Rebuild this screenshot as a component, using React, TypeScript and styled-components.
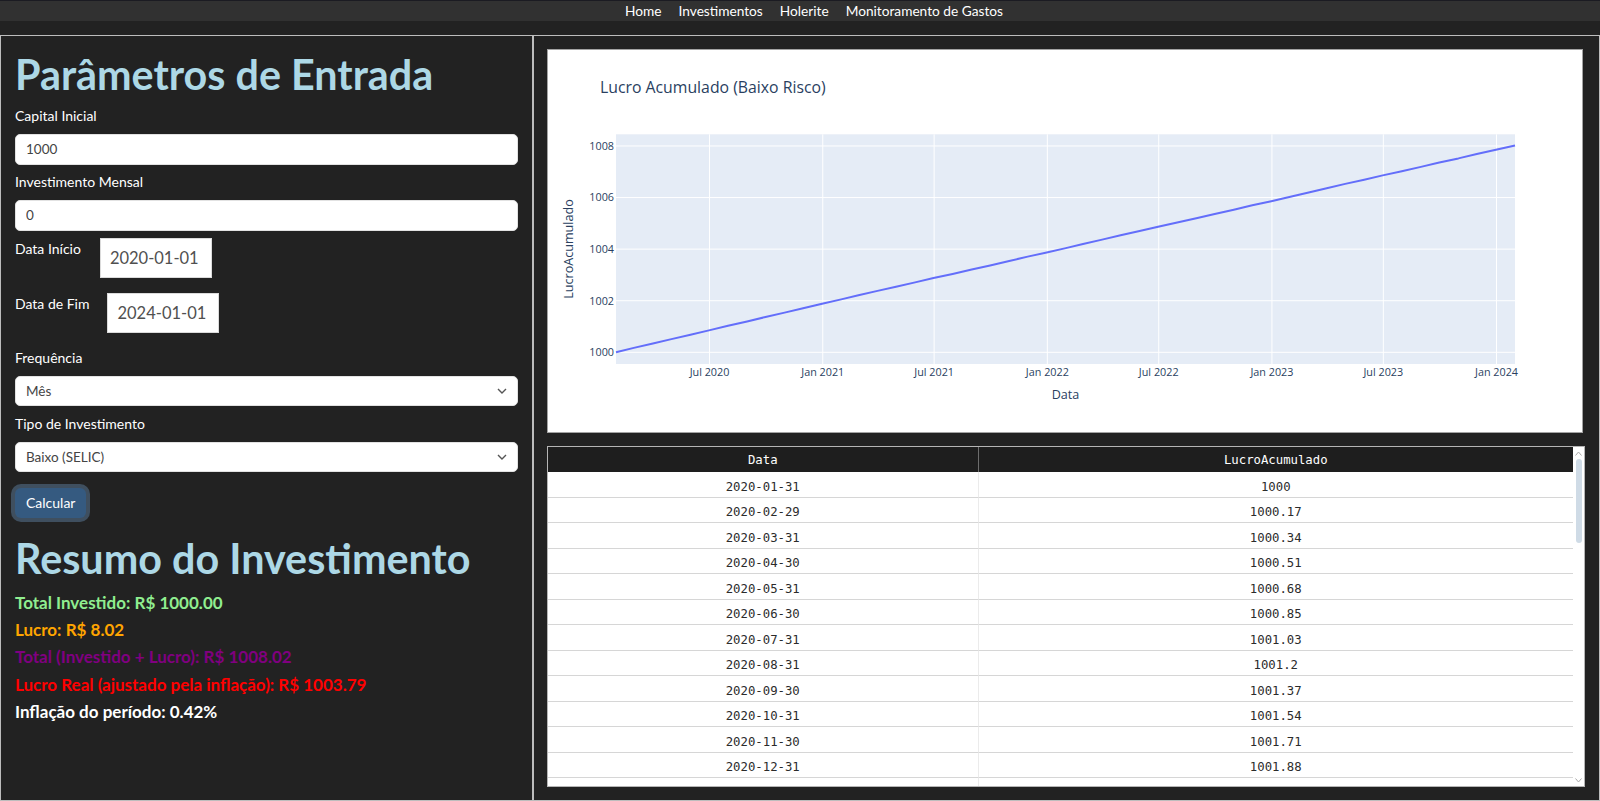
import React from 'react';
import styled, { createGlobalStyle } from 'styled-components';

// Estilos globais
const GlobalStyle = createGlobalStyle`
  html, body {
    margin: 0;
    padding: 0;
    background: #222222;
  }
  body {
    font-family: Lato, "Noto Sans", sans-serif;
    color: #ffffff;
    overflow: hidden;
  }
  * {
    box-sizing: border-box;
  }
`;

// Navegação
const NavBar = styled.nav`
  height: 21px;
  background: #313131;
  border-top: 1px solid #1b1b22;
  display: flex;
  justify-content: center;
  align-items: center;
  padding-left: 28px;
`;

const NavLink = styled.a`
  color: #ffffff;
  font-size: 13.7px;
  line-height: 20px;
  text-decoration: none;
  padding: 0 8.5px;
`;

// Layout principal
const Main = styled.div`
  display: flex;
  margin-top: 14px;
  height: 766px;
`;

const LeftPanel = styled.section`
  width: 533px;
  flex: none;
  border: 1px solid #bdbdbd;
  padding: 12.5px 14px;
  display: flex;
  flex-direction: column;
  align-items: flex-start;
`;

const RightPanel = styled.section`
  flex: 1;
  min-width: 0;
  border: 1px solid #bdbdbd;
  padding: 13px 14px 13px 13px;
  display: flex;
  flex-direction: column;
  gap: 13px;
`;

const Heading = styled.h1<{ $mt?: number }>`
  margin: ${p => p.$mt ?? 0}px 0 0;
  font-size: 41.3px;
  line-height: 50px;
  font-weight: 700;
  color: #add8e6;
`;

const Field = styled.div<{ $mt: number }>`
  width: 100%;
  margin-top: ${p => p.$mt}px;
  display: flex;
  flex-direction: column;
`;

const Label = styled.label`
  font-size: 14px;
  line-height: 21px;
  margin-bottom: 8px;
  color: #ffffff;
`;

const TextInput = styled.input`
  width: 100%;
  height: 31px;
  border: 1px solid #e2e2e2;
  border-radius: 5px;
  background: #ffffff;
  padding: 0 10px;
  font-family: Lato, sans-serif;
  font-size: 13.5px;
  color: #444444;
  outline: none;
`;

const DateRow = styled.div<{ $mt: number }>`
  display: flex;
  align-items: flex-start;
  margin-top: ${p => p.$mt}px;
`;

const DateLabel = styled(Label)<{ $gap: number }>`
  margin: 0 ${p => p.$gap}px 0 0;
`;

const DateBox = styled.input`
  width: 112px;
  height: 40px;
  border: 1px solid #dbdbdb;
  border-radius: 0;
  background: #ffffff;
  padding: 0 9px;
  font-family: Lato, sans-serif;
  font-size: 16.5px;
  color: #505050;
  outline: none;
`;

const SelectWrap = styled.div`
  position: relative;
  width: 100%;
`;

const SelectBox = styled.select`
  appearance: none;
  width: 100%;
  height: 30px;
  border: 1px solid #e2e2e2;
  border-radius: 5px;
  background: #ffffff;
  padding: 0 10px;
  font-family: Lato, sans-serif;
  font-size: 13.5px;
  color: #444444;
  outline: none;
`;

const Chevron = styled.svg`
  position: absolute;
  right: 11px;
  top: 50%;
  transform: translateY(-50%);
  pointer-events: none;
`;

const Button = styled.button`
  margin-top: 16px;
  height: 30px;
  padding: 0 11px;
  border: none;
  border-radius: 6px;
  background: #355a80;
  color: #ffffff;
  font-family: Lato, sans-serif;
  font-size: 14px;
  box-shadow: 0 0 0 4px rgba(88, 116, 146, 0.55);
  cursor: pointer;
`;

const Summary = styled.p<{ $color: string; $mt?: number }>`
  margin: ${p => p.$mt ?? 0}px 0 0;
  font-size: 17px;
  line-height: 27.25px;
  font-weight: 700;
  color: ${p => p.$color};
`;

// Gráfico
const ChartBox = styled.div`
  height: 384px;
  margin-right: 2px;
  border: 1px solid #a3a3a3;
  background: #ffffff;
  flex: none;
`;

// Tabela com barra de rolagem
const TableWrap = styled.div`
  height: 341px;
  flex: none;
  display: flex;
  border: 1px solid #b5b5b5;
  background: #ffffff;
`;

const TableScroll = styled.div`
  flex: 1;
  min-width: 0;
  overflow: hidden;
`;

const ScrollTrack = styled.div`
  width: 11px;
  flex: none;
  display: flex;
  flex-direction: column;
  align-items: center;
  background: #ffffff;
`;

const ScrollArrow = styled.svg`
  flex: none;
  margin: 4px 0 3px;
`;

const ScrollThumb = styled.div`
  width: 6px;
  height: 84px;
  border-radius: 3px;
  background: #cfdbe6;
`;

const ScrollSpacer = styled.div`
  flex: 1;
`;

const Table = styled.table`
  width: 100%;
  border-collapse: separate;
  border-spacing: 0;
  font-family: "DejaVu Sans Mono", "Liberation Mono", monospace;
  font-size: 12.3px;
`;

const HeadCell = styled.th<{ $width?: string }>`
  width: ${p => p.$width ?? 'auto'};
  height: 25px;
  padding: 0;
  background: #1e1e1e;
  color: #ffffff;
  font-weight: 400;
  text-align: center;
  border-right: 1px solid #6d6d6d;

  &:last-child {
    border-right: none;
  }
`;

const Cell = styled.td`
  height: 25.5px;
  padding: 5px 0 0;
  text-align: center;
  color: #2b2b2b;
  border-bottom: 1px solid #d6d6d6;
  border-right: 1px solid #ebebeb;

  &:last-child {
    border-right: none;
  }
`;

// Dados
interface Row {
  date: Date;
  label: string;
  value: number;
}

const known = [1000, 1000.17, 1000.34, 1000.51, 1000.68, 1000.85, 1001.03, 1001.2, 1001.37, 1001.54, 1001.71, 1001.88];

const rows: Row[] = Array.from({ length: 49 }).map((_, i) => {
  const date = new Date(Date.UTC(2020, i + 1, 0));
  const value = i < known.length
    ? known[i]
    : Math.round((1001.88 + ((1008.02 - 1001.88) * (i - 11)) / 37) * 100) / 100;
  return { date, label: date.toISOString().slice(0, 10), value };
});

const fmt = (v: number): string => Number(v.toFixed(2)).toString();

// Escalas do gráfico
const PLOT = { left: 68, right: 967, top: 84.3, bottom: 314 };
const t0 = rows[0].date.getTime();
const t1 = rows[rows.length - 1].date.getTime();
const xOf = (d: Date): number => PLOT.left + ((d.getTime() - t0) / (t1 - t0)) * (PLOT.right - PLOT.left);
const yOf = (v: number): number => 302.3 - (v - 1000) * 25.79;

const xTicks = [
  ['Jul 2020', Date.UTC(2020, 6, 1)],
  ['Jan 2021', Date.UTC(2021, 0, 1)],
  ['Jul 2021', Date.UTC(2021, 6, 1)],
  ['Jan 2022', Date.UTC(2022, 0, 1)],
  ['Jul 2022', Date.UTC(2022, 6, 1)],
  ['Jan 2023', Date.UTC(2023, 0, 1)],
  ['Jul 2023', Date.UTC(2023, 6, 1)],
  ['Jan 2024', Date.UTC(2024, 0, 1)],
] as const;

const yTicks = [1000, 1002, 1004, 1006, 1008];

const Chart: React.FC = () => {
  const points = rows.map(r => `${xOf(r.date).toFixed(1)},${yOf(r.value).toFixed(1)}`).join(' ');
  const font = '"Open Sans", Verdana, Arial, sans-serif';
  return (
    <svg width="100%" height="100%" viewBox="0 0 1034 382" preserveAspectRatio="none">
      <text x={52} y={42.7} fontFamily={font} fontSize={15.8} fill="#2a3f5f">
        Lucro Acumulado (Baixo Risco)
      </text>
      <rect
        x={PLOT.left}
        y={PLOT.top}
        width={PLOT.right - PLOT.left}
        height={PLOT.bottom - PLOT.top}
        fill="#e5ecf6"
      />
      {xTicks.map(([, t]) => {
        const x = xOf(new Date(t));
        return <line key={t} x1={x} x2={x} y1={PLOT.top} y2={PLOT.bottom} stroke="#ffffff" strokeWidth={1} />;
      })}
      {yTicks.map(v => (
        <line key={v} x1={PLOT.left} x2={PLOT.right} y1={yOf(v)} y2={yOf(v)} stroke="#ffffff" strokeWidth={1} />
      ))}
      <polyline points={points} fill="none" stroke="#636efa" strokeWidth={2} strokeLinejoin="round" />
      {yTicks.map(v => (
        <text key={v} x={66} y={yOf(v) + 3.8} textAnchor="end" fontFamily={font} fontSize={10.8} fill="#2a3f5f">
          {v}
        </text>
      ))}
      {xTicks.map(([label, t]) => (
        <text key={label} x={xOf(new Date(t))} y={325.5} textAnchor="middle" fontFamily={font} fontSize={10.8} fill="#2a3f5f">
          {label}
        </text>
      ))}
      <text x={517.5} y={348.5} textAnchor="middle" fontFamily={font} fontSize={12.6} fill="#2a3f5f">
        Data
      </text>
      <text
        transform="translate(25.4,199) rotate(-90)"
        textAnchor="middle"
        fontFamily={font}
        fontSize={12.6}
        fill="#2a3f5f"
      >
        LucroAcumulado
      </text>
    </svg>
  );
};

const ChevronIcon: React.FC = () => (
  <Chevron width="10" height="6" viewBox="0 0 10 6">
    <polyline points="1,1 5,5 9,1" fill="none" stroke="#555555" strokeWidth="1.4" />
  </Chevron>
);

const ScrollBar: React.FC = () => (
  <ScrollTrack>
    <ScrollArrow width="7" height="5" viewBox="0 0 7 5">
      <polyline points="0.5,4.5 3.5,1 6.5,4.5" fill="none" stroke="#a8a8a8" strokeWidth="1" />
    </ScrollArrow>
    <ScrollThumb />
    <ScrollSpacer />
    <ScrollArrow width="7" height="5" viewBox="0 0 7 5">
      <polyline points="0.5,0.5 3.5,4 6.5,0.5" fill="none" stroke="#a8a8a8" strokeWidth="1" />
    </ScrollArrow>
  </ScrollTrack>
);

const App: React.FC = () => {
  return (
    <>
      <GlobalStyle />
      <NavBar>
        <NavLink href="#">Home</NavLink>
        <NavLink href="#">Investimentos</NavLink>
        <NavLink href="#">Holerite</NavLink>
        <NavLink href="#">Monitoramento de Gastos</NavLink>
      </NavBar>

      <Main>
        <LeftPanel>
          <Heading>Parâmetros de Entrada</Heading>

          <Field $mt={6}>
            <Label>Capital Inicial</Label>
            <TextInput defaultValue="1000" />
          </Field>
          <Field $mt={6}>
            <Label>Investimento Mensal</Label>
            <TextInput defaultValue="0" />
          </Field>

          <DateRow $mt={7.7}>
            <DateLabel $gap={19}>Data Início</DateLabel>
            <DateBox defaultValue="2020-01-01" />
          </DateRow>
          <DateRow $mt={14.8}>
            <DateLabel $gap={18}>Data de Fim</DateLabel>
            <DateBox defaultValue="2024-01-01" />
          </DateRow>

          <Field $mt={14}>
            <Label>Frequência</Label>
            <SelectWrap>
              <SelectBox defaultValue="M">
                <option value="M">Mês</option>
                <option value="A">Ano</option>
              </SelectBox>
              <ChevronIcon />
            </SelectWrap>
          </Field>
          <Field $mt={6.7}>
            <Label>Tipo de Investimento</Label>
            <SelectWrap>
              <SelectBox defaultValue="baixo">
                <option value="baixo">Baixo (SELIC)</option>
                <option value="medio">Médio</option>
                <option value="alto">Alto</option>
              </SelectBox>
              <ChevronIcon />
            </SelectWrap>
          </Field>

          <Button>Calcular</Button>

          <Heading $mt={15.5}>Resumo do Investimento</Heading>
          <Summary $mt={5.6} $color="#90ee90">Total Investido: R$ 1000.00</Summary>
          <Summary $color="#ffa500">Lucro: R$ 8.02</Summary>
          <Summary $color="#800080">Total (Investido + Lucro): R$ 1008.02</Summary>
          <Summary $color="#ff0000">Lucro Real (ajustado pela inflação): R$ 1003.79</Summary>
          <Summary $color="#ffffff">Inflação do período: 0.42%</Summary>
        </LeftPanel>

        <RightPanel>
          <ChartBox>
            <Chart />
          </ChartBox>
          <TableWrap>
            <TableScroll>
              <Table>
                <thead>
                  <tr>
                    <HeadCell $width="42%">Data</HeadCell>
                    <HeadCell>LucroAcumulado</HeadCell>
                  </tr>
                </thead>
                <tbody>
                  {rows.map(r => (
                    <tr key={r.label}>
                      <Cell>{r.label}</Cell>
                      <Cell>{fmt(r.value)}</Cell>
                    </tr>
                  ))}
                </tbody>
              </Table>
            </TableScroll>
            <ScrollBar />
          </TableWrap>
        </RightPanel>
      </Main>
    </>
  );
};

export default App;
